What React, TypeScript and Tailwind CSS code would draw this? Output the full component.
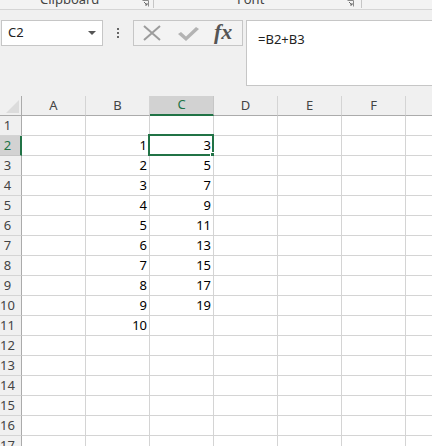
const cols = ["A", "B", "C", "D", "E", "F", "G"];
const rows = Array.from({ length: 17 }, (_, i) => i + 1);

function cellValue(col: string, row: number): string {
  if (col === "B" && row >= 2 && row <= 11) return String(row - 1);
  if (col === "C" && row >= 2 && row <= 10) return String(2 * row - 1);
  return "";
}

function Launcher() {
  return (
    <svg width="7" height="7" viewBox="0 0 7 7" className="block">
      <path d="M0.5 0.5H6.5V6.5" fill="none" stroke="#8a8a8a" strokeWidth="1" />
      <path d="M2 2L5 5M5 3V5H3" fill="none" stroke="#6a6a6a" strokeWidth="1" />
    </svg>
  );
}

export default function App() {
  return (
    <div
      className="w-[432px] h-[446px] overflow-hidden bg-[#f0f0f0] text-[#444]"
      style={{ fontFamily: '"Noto Sans", "Open Sans", sans-serif' }}
    >
      {/* Ribbon group labels */}
      <div className="relative h-[10px] border-b border-[#d5d5d5] bg-[#f3f3f3] overflow-hidden">
        <span className="absolute left-[40px] -top-[9px] text-[13px] leading-[16px]">Clipboard</span>
        <div className="absolute left-[142px] top-0">
          <Launcher />
        </div>
        <div className="absolute left-[153px] top-0 h-[8px] w-px bg-[#c6c6c6]" />
        <span className="absolute left-[237px] -top-[9px] text-[13px] leading-[16px]">Font</span>
        <div className="absolute left-[347px] top-0">
          <Launcher />
        </div>
        <div className="absolute left-[361px] top-0 h-[8px] w-px bg-[#c6c6c6]" />
      </div>

      {/* Formula row */}
      <div className="h-[76px] pt-[10px] flex items-start">
        <div className="ml-[1px] w-[102px] h-[26px] bg-white border border-[#c6c6c6] flex items-center justify-between pl-[6px] pr-[6px]">
          <span className="text-[13px] text-[#222]">C2</span>
          <svg width="8" height="5" viewBox="0 0 8 5">
            <path d="M0 0H8L4 4Z" fill="#555" />
          </svg>
        </div>
        <div className="w-[30px] h-[26px] flex flex-col items-center justify-center gap-[2px]">
          <div className="w-[2px] h-[2px] bg-[#666]" />
          <div className="w-[2px] h-[2px] bg-[#666]" />
          <div className="w-[2px] h-[2px] bg-[#666]" />
        </div>
        <div className="w-[110px] h-[26px] bg-[#f3f3f3] border border-[#c6c6c6] flex items-center pl-[9px]">
          <svg width="18" height="16" viewBox="0 0 18 16">
            <path d="M1 1L17 15M17 1L1 15" stroke="#9c9c9c" strokeWidth="2" />
          </svg>
          <svg width="21" height="14" viewBox="0 0 21 14" className="ml-[17px] mt-[2px]">
            <path d="M0 7L3 5L8 9.5L18 0L21 2L8 14Z" fill="#b3b3b3" />
          </svg>
          <span
            className="ml-[15px] -mt-[2px] text-[22px] italic font-bold text-[#555] leading-none"
            style={{ fontFamily: '"Liberation Serif", "DejaVu Serif", serif' }}
          >
            fx
          </span>
        </div>
        <div className="ml-[3px] flex-1 h-[66px] bg-white border border-[#c6c6c6] border-r-0 pl-[11px] pt-[5px]">
          <span className="text-[13px] text-[#222]">=B2+B3</span>
        </div>
      </div>

      {/* Grid */}
      <div className="mt-[10px] grid grid-cols-[22px_repeat(7,64px)] auto-rows-[20px] text-[13px]">
        <div className="relative bg-[#f0f0f0] border-r border-b border-[#ababab]">
          <svg width="13" height="13" viewBox="0 0 13 13" className="absolute left-[6px] top-[4px]">
            <path d="M13 0V13H0Z" fill="#dcdcdc" />
          </svg>
        </div>
        {cols.map((c) => (
          <div
            key={c}
            className={
              c === "C"
                ? "flex items-center justify-center bg-[#d2d2d2] text-[#217346] border-r border-[#c6c6c6] border-b-2 border-b-[#217346]"
                : "flex items-center justify-center bg-[#f0f0f0] border-r border-[#d4d4d4] border-b border-b-[#ababab]"
            }
          >
            {c === "G" ? "" : c}
          </div>
        ))}
        {rows.map((r) => (
          <>
            <div
              key={`h${r}`}
              className={
                r === 2
                  ? "flex items-center justify-center pr-[5px] bg-[#d2d2d2] text-[#217346] border-b border-[#c6c6c6] border-r-2 border-r-[#217346]"
                  : "flex items-center justify-center pr-[6px] bg-[#f0f0f0] border-b border-[#d4d4d4] border-r border-r-[#ababab]"
              }
            >
              {r}
            </div>
            {cols.map((c) => (
              <div
                key={`${c}${r}`}
                className="relative bg-white border-r border-b border-[#d4d4d4] flex items-end justify-end pr-[2px] pb-[1px] text-black leading-[17px]"
              >
                {cellValue(c, r)}
                {c === "C" && r === 2 && (
                  <>
                    <div className="absolute -left-[2px] -top-[2px] -right-[1px] -bottom-[1px] border-2 border-[#217346]" />
                    <div className="absolute -right-[3px] -bottom-[3px] w-[6px] h-[6px] bg-[#217346] border border-white" />
                  </>
                )}
              </div>
            ))}
          </>
        ))}
      </div>
    </div>
  );
}
